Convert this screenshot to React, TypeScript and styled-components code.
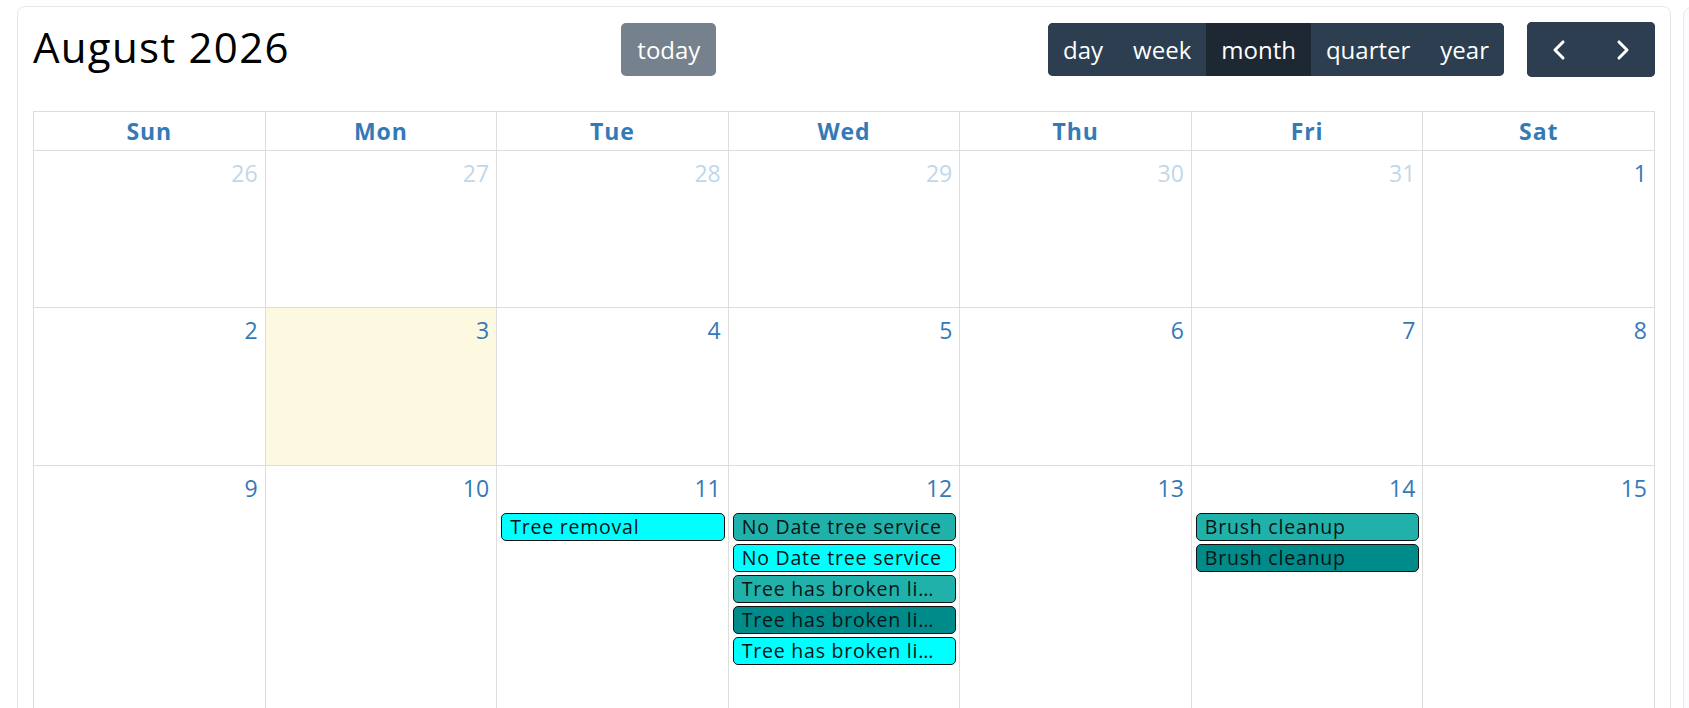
import React from "react";
import styled, { createGlobalStyle } from "styled-components";

const GlobalStyle = createGlobalStyle`
  html, body {
    margin: 0;
    padding: 0;
    background: #ffffff;
    font-family: "Open Sans", "Noto Sans", sans-serif;
    overflow: hidden;
  }
  * {
    box-sizing: border-box;
  }
`;

const Page = styled.div`
  display: flex;
  gap: 12px;
  padding: 6px 0 0 17px;
  width: 1689px;
  height: 708px;
  overflow: hidden;
`;

const Card = styled.div`
  flex: 0 0 1654px;
  min-height: 1300px;
  background: #ffffff;
  border: 1px solid #e3e8ee;
  border-radius: 8px;
  padding: 15px 15px 0 15px;
`;

const SideCard = styled.div`
  flex: 0 0 300px;
  margin-top: 1px;
  min-height: 1300px;
  background: #fbfbfd;
  border: 1px solid #e6e9f0;
  border-radius: 8px;
`;

const Toolbar = styled.div`
  display: flex;
  align-items: center;
  justify-content: space-between;
  height: 55px;
  margin-bottom: 34px;
`;

const Title = styled.h2`
  margin: 0 0 5px 0;
  font-size: 42px;
  font-weight: 400;
  letter-spacing: 0.03em;
  line-height: 1.2;
  color: #000000;
`;

const TodayButton = styled.button`
  height: 53px;
  padding: 0 16px;
  border: none;
  border-radius: 5px;
  background: #2c3e50;
  opacity: 0.65;
  color: #ffffff;
  font-family: inherit;
  font-size: 24px;
  line-height: 53px;
`;

const RightChunk = styled.div`
  display: flex;
  align-items: center;
  gap: 23px;
`;

const ButtonGroup = styled.div`
  display: flex;
  border-radius: 5px;
  overflow: hidden;
  background: #2c3e50;
`;

const GroupButton = styled.button<{ $active?: boolean }>`
  height: 53px;
  padding: 0 15px;
  border: none;
  background: ${(p) => (p.$active ? "#1e2832" : "#2c3e50")};
  color: #ffffff;
  font-family: inherit;
  font-size: 24px;
  line-height: 53px;
`;

const NavButton = styled.button`
  display: flex;
  align-items: center;
  justify-content: center;
  width: 64px;
  height: 55px;
  padding: 0;
  border: none;
  background: #2c3e50;
  color: #ffffff;
`;

const Grid = styled.div`
  display: grid;
  grid-template-columns: repeat(7, 1fr);
  grid-template-rows: 39px 157px 158px 280px 158px 158px 158px;
  border-top: 1px solid #dddddd;
  border-left: 1px solid #dddddd;
`;

const HeadCell = styled.div`
  border-right: 1px solid #dddddd;
  border-bottom: 1px solid #dddddd;
  text-align: center;
  font-size: 23px;
  font-weight: 700;
  letter-spacing: 0.04em;
  line-height: 38px;
  color: #337ab7;
`;

const DayCell = styled.div<{ $today?: boolean }>`
  display: flex;
  flex-direction: column;
  min-width: 0;
  border-right: 1px solid #dddddd;
  border-bottom: 1px solid #dddddd;
  background: ${(p) => (p.$today ? "#fdf8e0" : "#ffffff")};
`;

const DayNumber = styled.div<{ $muted?: boolean }>`
  padding: 5px 7px 0 0;
  text-align: right;
  font-size: 23px;
  line-height: 34.5px;
  color: #337ab7;
  opacity: ${(p) => (p.$muted ? 0.3 : 1)};
`;

const EventList = styled.div`
  display: flex;
  flex-direction: column;
  gap: 3px;
  padding: 7px 3px 0 4px;
`;

const EventChip = styled.div<{ $bg: string }>`
  flex: 0 0 28px;
  height: 28px;
  padding: 0 8px;
  border: 1px solid #111111;
  border-radius: 5px;
  background: ${(p) => p.$bg};
  color: #0a1414;
  font-size: 19.5px;
  letter-spacing: 0.04em;
  line-height: 26px;
  white-space: nowrap;
  overflow: hidden;
  text-overflow: ellipsis;
`;

const CYAN = "#00ffff";
const SEA = "#20b2aa";
const TEAL = "#008b8b";

type CalEvent = { title: string; color: string };

const events: Record<number, CalEvent[]> = {
  11: [{ title: "Tree removal", color: CYAN }],
  12: [
    { title: "No Date tree service", color: SEA },
    { title: "No Date tree service", color: CYAN },
    { title: "Tree has broken limbs", color: SEA },
    { title: "Tree has broken limbs", color: TEAL },
    { title: "Tree has broken limbs", color: CYAN },
  ],
  14: [
    { title: "Brush cleanup", color: SEA },
    { title: "Brush cleanup", color: TEAL },
  ],
};

const weekdays = ["Sun", "Mon", "Tue", "Wed", "Thu", "Fri", "Sat"];

// August 2026 starts on a Saturday, so the grid opens on Sun Jul 26
const days = Array.from({ length: 42 }, (_, i) => {
  const offset = i - 6;
  if (offset < 0) return { n: 26 + i, muted: true };
  if (offset >= 31) return { n: offset - 30, muted: true };
  return { n: offset + 1, muted: false };
});

const Chevron = ({ dir }: { dir: "left" | "right" }) => (
  <svg width="32" height="32" viewBox="0 0 24 24" fill="none" stroke="currentColor" strokeWidth="2.3" strokeLinecap="round" strokeLinejoin="round">
    <path d={dir === "left" ? "M15 18l-6-6 6-6" : "M9 18l6-6-6-6"} />
  </svg>
);

export default function App() {
  return (
    <>
      <GlobalStyle />
      <Page>
        <Card>
          <Toolbar>
            <Title>August 2026</Title>
            <TodayButton>today</TodayButton>
            <RightChunk>
              <ButtonGroup>
                <GroupButton>day</GroupButton>
                <GroupButton>week</GroupButton>
                <GroupButton $active>month</GroupButton>
                <GroupButton>quarter</GroupButton>
                <GroupButton>year</GroupButton>
              </ButtonGroup>
              <ButtonGroup>
                <NavButton>
                  <Chevron dir="left" />
                </NavButton>
                <NavButton>
                  <Chevron dir="right" />
                </NavButton>
              </ButtonGroup>
            </RightChunk>
          </Toolbar>

          <Grid>
            {weekdays.map((d) => (
              <HeadCell key={d}>{d}</HeadCell>
            ))}
            {days.map((d, i) => {
              const list = d.muted ? [] : events[d.n] || [];
              return (
                <DayCell key={i} $today={!d.muted && d.n === 3}>
                  <DayNumber $muted={d.muted}>{d.n}</DayNumber>
                  {list.length > 0 && (
                    <EventList>
                      {list.map((e, j) => (
                        <EventChip key={j} $bg={e.color}>
                          {e.title}
                        </EventChip>
                      ))}
                    </EventList>
                  )}
                </DayCell>
              );
            })}
          </Grid>
        </Card>
        <SideCard />
      </Page>
    </>
  );
}
